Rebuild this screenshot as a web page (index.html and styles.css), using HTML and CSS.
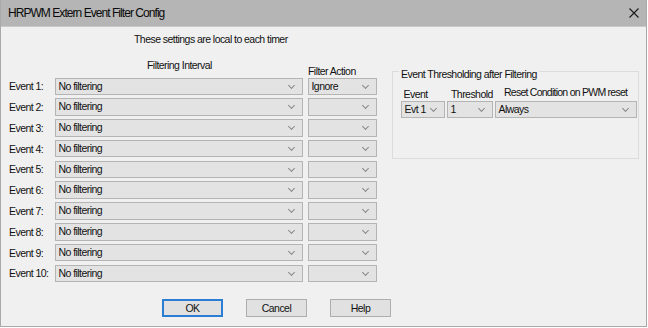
FILE: index.html
```html
<!doctype html>
<html lang="en">
<head>
<meta charset="utf-8">
<title>HRPWM Extern Event Filter Config</title>
<link rel="stylesheet" href="styles.css">
</head>
<body>

<div class="win">

	<div class="titlebar">
		<span class="title">HRPWM Extern Event Filter Config</span>
		<svg class="close" width="10" height="10" viewBox="0 0 10 10">
			<path d="M0.5 0.5 L9.5 9.5 M9.5 0.5 L0.5 9.5" stroke="#1a1a1a" stroke-width="1.1" fill="none"/>
		</svg>
	</div>

	<div class="client">

		<div class="main">

			<div class="filters">
				<p class="note">These settings are local to each timer</p>

				<div class="heads">
					<span class="h-int">Filtering Interval</span>
					<span class="h-act">Filter Action</span>
				</div>

				<div class="rows">
					<div class="row"><span class="lbl">Event 1:</span><div class="combo wide">No filtering</div><div class="combo act">Ignore</div></div>
					<div class="row"><span class="lbl">Event 2:</span><div class="combo wide">No filtering</div><div class="combo act"></div></div>
					<div class="row"><span class="lbl">Event 3:</span><div class="combo wide">No filtering</div><div class="combo act"></div></div>
					<div class="row"><span class="lbl">Event 4:</span><div class="combo wide">No filtering</div><div class="combo act"></div></div>
					<div class="row"><span class="lbl">Event 5:</span><div class="combo wide">No filtering</div><div class="combo act"></div></div>
					<div class="row"><span class="lbl">Event 6:</span><div class="combo wide">No filtering</div><div class="combo act"></div></div>
					<div class="row"><span class="lbl">Event 7:</span><div class="combo wide">No filtering</div><div class="combo act"></div></div>
					<div class="row"><span class="lbl">Event 8:</span><div class="combo wide">No filtering</div><div class="combo act"></div></div>
					<div class="row"><span class="lbl">Event 9:</span><div class="combo wide">No filtering</div><div class="combo act"></div></div>
					<div class="row"><span class="lbl">Event 10:</span><div class="combo wide">No filtering</div><div class="combo act"></div></div>
				</div>
			</div>

			<div class="group">
				<span class="group-title">Event Thresholding after Filtering</span>
				<div class="g-grid">
					<span class="g-lbl g-evt">Event</span>
					<span class="g-lbl g-thr">Threshold</span>
					<span class="g-lbl g-rst">Reset Condition on PWM reset</span>
					<div class="combo">Evt 1</div>
					<div class="combo">1</div>
					<div class="combo">Always</div>
				</div>
			</div>

		</div>

		<div class="buttons">
			<button class="btn default">OK</button>
			<button class="btn">Cancel</button>
			<button class="btn">Help</button>
		</div>

	</div>

</div>

</body>
</html>
```

FILE: styles.css
```css
body { margin:0; background:#fff; }

.win {
	width:647px; height:327px;
	box-sizing:border-box;
	border:1px solid #a9a9a9;
	border-top:0;
	background:#f0f0f0;
	font-family:"Liberation Sans", Arial, sans-serif;
	font-size:10.5px;
	letter-spacing:-0.55px;
	color:#111;
}

/* title bar */

.titlebar {
	display:flex;
	align-items:center;
	justify-content:space-between;
	height:26px;
	padding:0 7px 0 7px;
	background:#b5b5b5;
	border-bottom:1px solid #c8c8c8;
}

.titlebar .title {
	font-size:12px;
	letter-spacing:-0.95px;
	color:#0a0a0a;
}

/* client */

.client { padding-left:8px; }

.main { display:flex; align-items:flex-start; }

.note {
	margin:6px 0 0 125px;
	line-height:12px;
}

.heads {
	display:flex;
	align-items:flex-start;
	height:18.5px;
	margin-top:14px;
	padding-left:46px;
	line-height:12px;
}

.heads .h-int { width:161px; padding-left:92px; }
.heads .h-act { margin-top:5.5px; }

.rows { display:flex; flex-direction:column; gap:3.3px; }

.row { display:flex; align-items:center; height:17.5px; }

.row .lbl { width:46px; }

/* combo box */

.combo {
	position:relative;
	box-sizing:border-box;
	height:17.5px;
	padding-left:2.5px;
	line-height:15.5px;
	background:#e3e3e3;
	border:1px solid #b4b4b4;
	white-space:nowrap;
}

.combo::after {
	content:"";
	position:absolute;
	right:8px; top:4px;
	width:4px; height:4px;
	border-right:1px solid #888;
	border-bottom:1px solid #888;
	transform:rotate(45deg);
}

.combo.wide { width:248px; }
.combo.act { width:69px; margin-left:5px; }

/* group box */

.group {
	position:relative;
	box-sizing:border-box;
	width:247px; height:88.5px;
	margin:43.7px 0 0 15px;
	padding:14px 0 0 8px;
	border:1px solid #dcdcdc;
}

.group-title {
	position:absolute;
	left:6px; top:-4px;
	padding:0 2px;
	line-height:12px;
	background:#f0f0f0;
}

.g-grid {
	display:grid;
	grid-template-columns:44px 46px 141.5px;
	grid-template-rows:15.3px 17.5px;
	column-gap:2px;
}

.g-lbl { line-height:12px; align-self:end; padding-bottom:1px; white-space:nowrap; }
.g-evt { padding-left:2.5px; }
.g-thr { padding-left:4px; }
.g-rst { padding-left:9px; padding-bottom:3px; letter-spacing:-0.75px; }

/* buttons */

.buttons {
	display:flex;
	gap:23px;
	margin-top:17px;
	padding-left:153px;
}

.btn {
	box-sizing:border-box;
	width:61px; height:17.5px;
	padding:0;
	font:inherit;
	letter-spacing:inherit;
	background:#e1e1e1;
	border:1px solid #adadad;
	color:#111;
}

.btn.default {
	border-color:#2a7fd4;
	box-shadow:inset 0 0 0 1px #2a7fd4;
}
```
